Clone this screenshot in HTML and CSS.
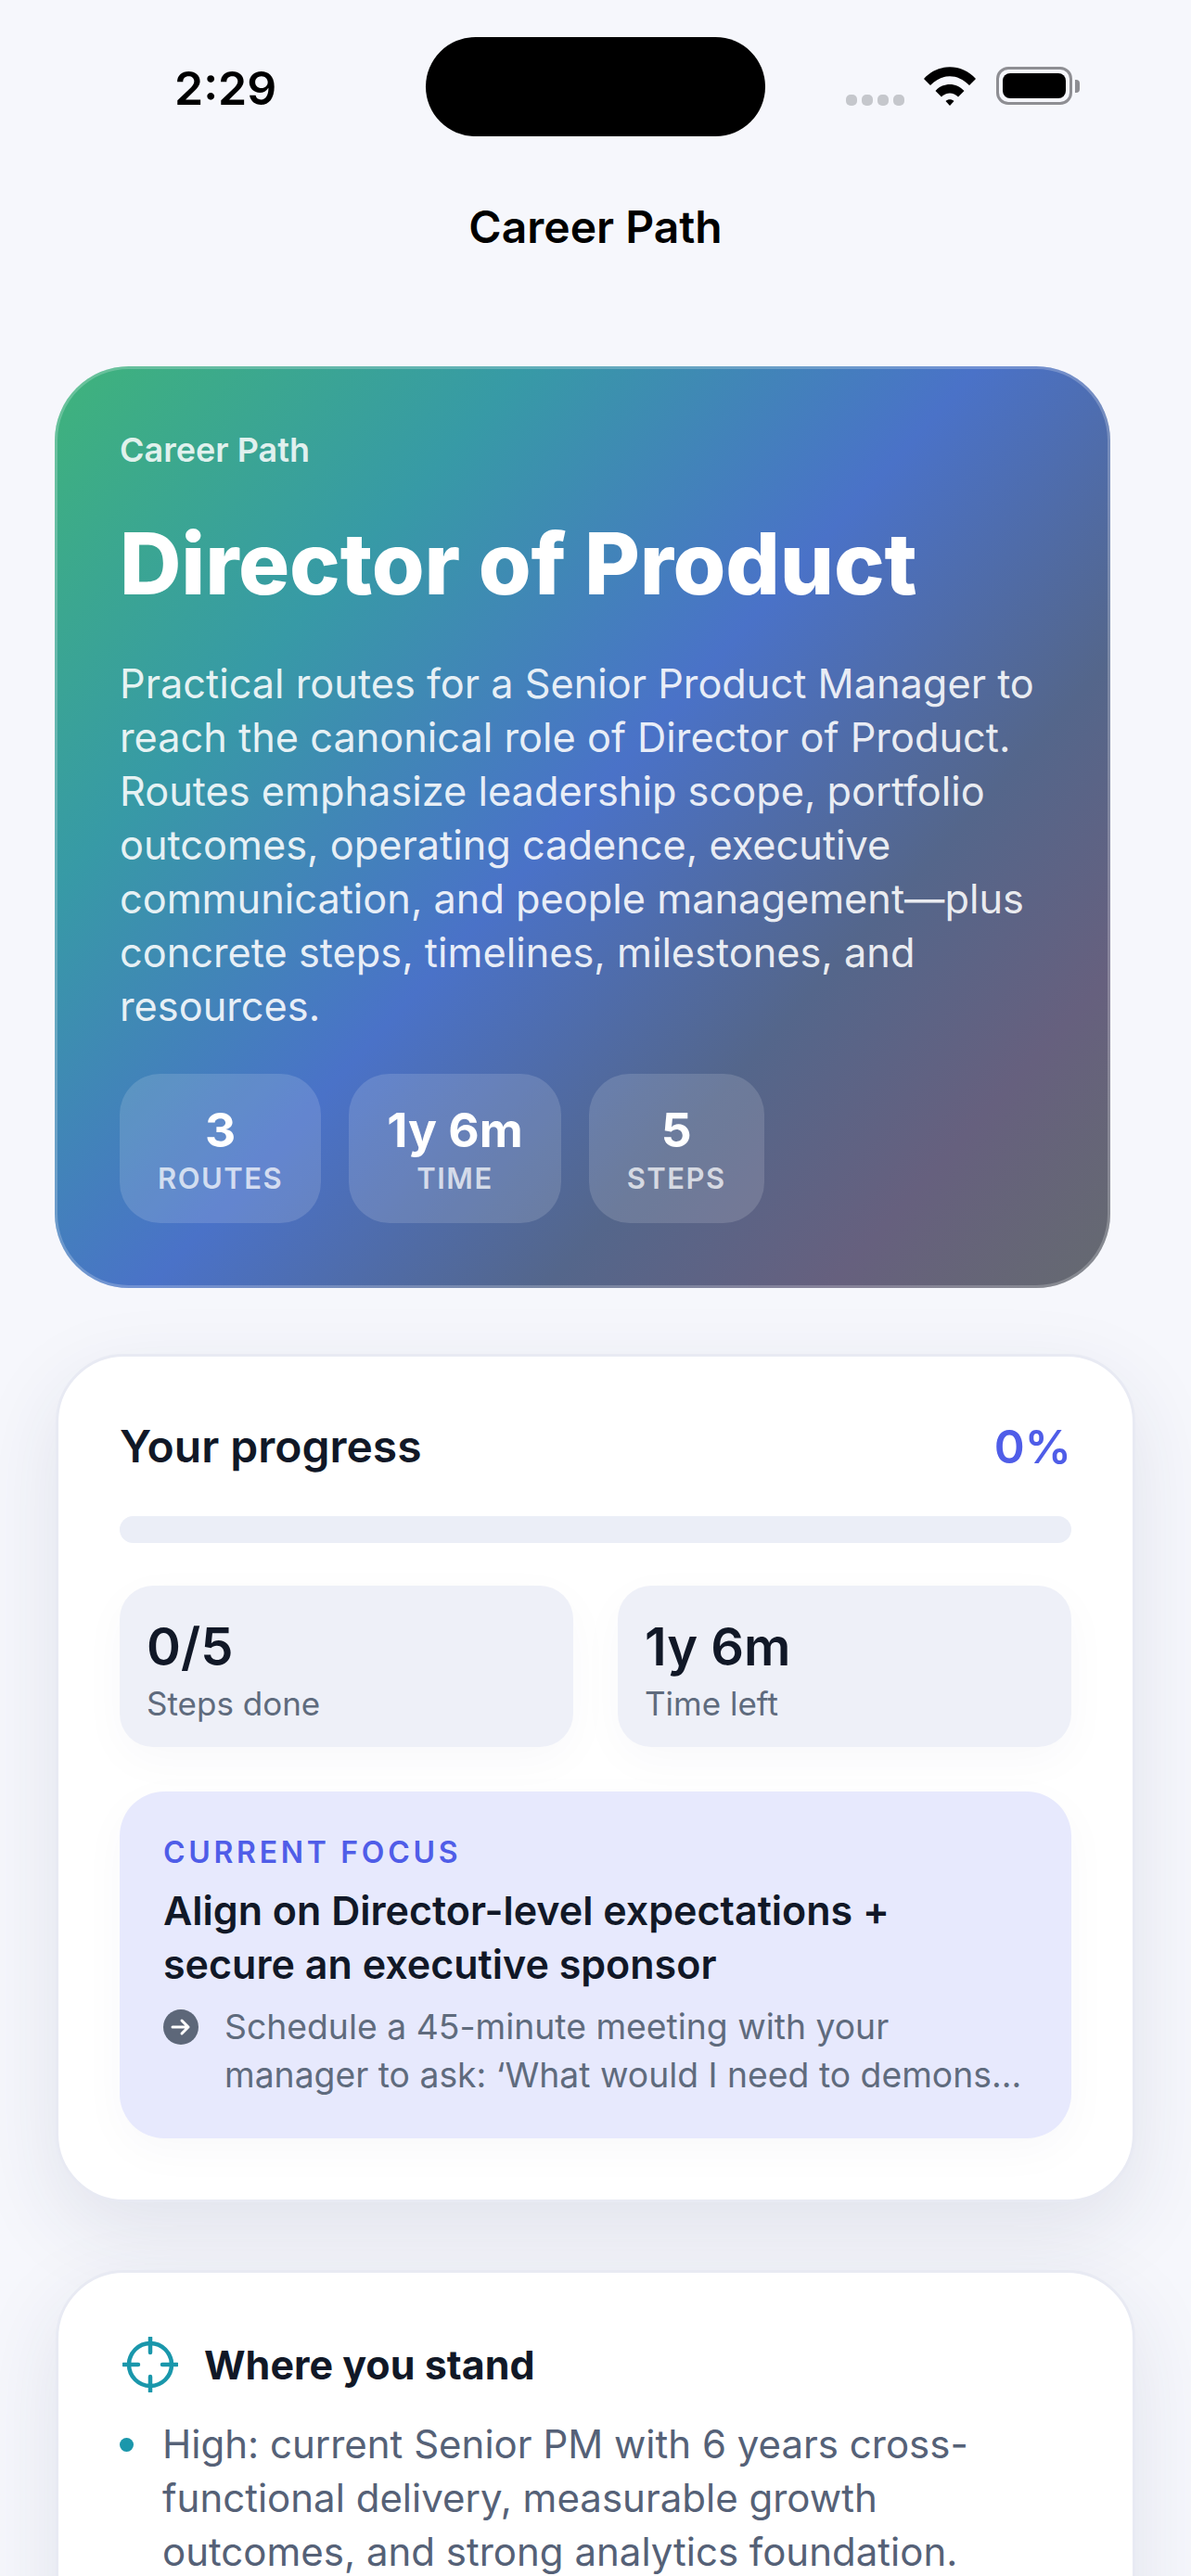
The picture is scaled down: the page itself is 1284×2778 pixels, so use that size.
FILE: index.html
```html
<!DOCTYPE html>
<html lang="en">
<head>
<meta charset="utf-8">
<title>Career Path</title>
<link rel="stylesheet" href="styles.css">
</head>
<body>
<div class="screen">
  <header class="status">
    <span class="time">2:29</span>
    <span class="island"></span>
    <span class="status-right">
      <span class="signal"><i></i><i></i><i></i><i></i></span>
      <svg class="wifi" viewBox="0 0 56 42"><path d="M0 13C15-4 41-4 56 13L49 20C36 7 20 7 7 20Z"/><path d="M12.500 26C21 16.500 35 16.500 43.500 26L37 32.500C31.500 27 24.500 27 19 32.500Z"/><path d="M23.500 37C26 34.500 30 34.500 32.500 37L28 42Z"/></svg>
      <span class="battery"><span class="battery-fill"></span></span>
      <span class="battery-nub"></span>
    </span>
  </header>
  <h1 class="nav-title">Career Path</h1>

  <section class="hero">
    <div class="hero-label">Career Path</div>
    <h2 class="hero-title">Director of Product</h2>
    <p class="hero-desc">Practical routes for a Senior Product Manager to reach the canonical role of Director of Product. Routes emphasize leadership scope, portfolio outcomes, operating cadence, executive communication, and people management—plus concrete steps, timelines, milestones, and resources.</p>
    <div class="pills">
      <div class="pill"><b>3</b><span>ROUTES</span></div>
      <div class="pill"><b>1y 6m</b><span>TIME</span></div>
      <div class="pill"><b>5</b><span>STEPS</span></div>
    </div>
  </section>

  <section class="card progress-card">
    <div class="progress-head"><h3>Your progress</h3><span class="percent">0%</span></div>
    <div class="bar"></div>
    <div class="stats">
      <div class="stat"><b>0/5</b><span>Steps done</span></div>
      <div class="stat"><b>1y 6m</b><span>Time left</span></div>
    </div>
    <div class="focus">
      <div class="focus-label">CURRENT FOCUS</div>
      <div class="focus-title">Align on Director-level expectations + secure an executive sponsor</div>
      <div class="focus-row">
        <svg class="focus-icon" viewBox="0 0 38 38"><circle cx="19" cy="19" r="19" fill="#5d6779"/><path d="M10 19H27M20 12L27 19L20 26" fill="none" stroke="#fff" stroke-width="3" stroke-linecap="round" stroke-linejoin="round"/></svg>
        <p class="focus-text">Schedule a 45-minute meeting with your manager to ask: ‘What would I need to demons…</p>
      </div>
    </div>
  </section>

  <section class="card stand-card">
    <div class="stand-head">
      <svg class="target" viewBox="0 0 60 60"><circle cx="30" cy="30" r="23" fill="none" stroke="#1a97ab" stroke-width="4.500"/><path d="M30 1V17M30 43V59M1 30H17M43 30H59" fill="none" stroke="#1a97ab" stroke-width="4.500" stroke-linecap="round"/></svg>
      <h3>Where you stand</h3>
    </div>
    <ul class="stand-list">
      <li>High: current Senior PM with 6 years cross-functional delivery, measurable growth outcomes, and strong analytics foundation.</li>
    </ul>
  </section>
</div>
</body>
</html>
```
FILE: styles.css
```css
* { box-sizing: border-box; }
html, body { margin: 0; padding: 0; }
body { background: #f6f7fc; font-family: Inter, "Noto Sans", sans-serif; color: #111827; }
.screen { width: 1284px; height: 2778px; overflow: hidden; }
h1, h2, h3, p, ul { margin: 0; padding: 0; }

.status { display: flex; align-items: flex-start; height: 147px; padding: 40px 0 0 188px; }
.time { width: 271px; margin-top: 27px; font-size: 50px; line-height: 56px; font-weight: 600; color: #000; }
.island { width: 366px; height: 107px; border-radius: 54px; background: #000; }
.status-right { display: flex; align-items: flex-start; margin-left: 87px; padding-top: 32px; }
.signal { display: flex; gap: 5px; margin-top: 30px; }
.signal i { width: 12px; height: 12px; border-radius: 5px; background: #c5c7cc; }
.wifi { width: 56px; height: 42px; margin-left: 21px; fill: #000; }
.battery { display: block; width: 82px; height: 41px; margin-left: 22px; padding: 4px; border: 3px solid #8e8e93; border-radius: 13px; }
.battery-fill { display: block; height: 100%; border-radius: 8px; background: #000; }
.battery-nub { width: 5px; height: 14px; margin: 14px 0 0 3px; border-radius: 0 4px 4px 0; background: #8e8e93; }
.nav-title { height: 248px; padding-top: 67px; text-align: center; font-size: 48px; line-height: 62px; font-weight: 600; color: #000; }

.hero { width: 1138px; height: 994px; margin-left: 59px; padding: 70px; border-radius: 80px; color: #fff; background: linear-gradient(132deg, #3fb37b 0%, #379aa6 25%, #4a72c8 49%, #54668b 70%, #66607e 85%, #656a70 100%); box-shadow: inset 0 0 0 3px rgba(255, 255, 255, .22); }
.hero-label { font-size: 36px; line-height: 40px; font-weight: 600; color: rgba(255, 255, 255, .85); }
.hero-title { margin-top: 50px; font-size: 92px; line-height: 106px; font-weight: 800; letter-spacing: -.2px; }
.hero-desc { margin-top: 47px; font-size: 43.300px; line-height: 58px; font-weight: 400; color: rgba(255, 255, 255, .88); }
.pills { display: flex; gap: 30px; margin-top: 44px; }
.pill { display: flex; flex-direction: column; align-items: center; height: 161px; padding: 30px 41px 0; border-radius: 44px; background: rgba(255, 255, 255, .14); }
.pill b { font-size: 51.500px; line-height: 60px; font-weight: 700; }
.pill span { margin-top: 3px; font-size: 31px; line-height: 40px; font-weight: 600; color: rgba(255, 255, 255, .72); letter-spacing: 1.500px; }

.card { width: 1164px; margin-left: 60px; background: #fff; border: 3px solid #e8eaf3; border-radius: 74px; box-shadow: 0 30px 90px rgba(40, 45, 85, .1); }
.progress-card { height: 915px; margin-top: 71px; padding: 67px 66px 0; }
.progress-head { display: flex; justify-content: space-between; align-items: center; height: 60px; }
.progress-head h3 { font-size: 48px; line-height: 60px; font-weight: 600; color: #111827; }
.percent { font-size: 50px; line-height: 60px; font-weight: 600; color: #4f5de8; }
.bar { height: 29px; margin-top: 45px; border-radius: 15px; background: #ebeef7; }
.stats { display: grid; grid-template-columns: 1fr 1fr; gap: 48px; margin-top: 46px; }
.stat { display: flex; flex-direction: column; height: 174px; padding: 34px 29px 0; border-radius: 36px; background: #eef0f8; box-shadow: 0 14px 50px rgba(40, 45, 85, .03); }
.stat b { font-size: 56px; line-height: 64px; font-weight: 600; color: #111827; }
.stat span { margin-top: 6px; font-size: 35px; line-height: 46px; color: #5f6b7d; }
.focus { height: 374px; margin-top: 48px; padding: 46px 47px 0; border-radius: 48px; background: #e7e9fd; box-shadow: 0 14px 50px rgba(40, 45, 85, .03); }
.focus-label { font-size: 32px; line-height: 40px; font-weight: 600; letter-spacing: 3.700px; color: #4f5de8; }
.focus-title { margin-top: 13px; font-size: 43px; line-height: 58px; font-weight: 600; color: #111827; }
.focus-row { display: flex; gap: 28px; margin-top: 13px; }
.focus-icon { flex: none; width: 38px; height: 38px; margin-top: 7px; }
.focus-text { font-size: 37.300px; line-height: 52px; color: #5f6b7d; }

.stand-card { height: 600px; margin-top: 73px; padding: 69px 66px 0; }
.stand-head { display: flex; align-items: center; gap: 28px; height: 60px; padding-left: 3px; }
.target { flex: none; width: 60px; height: 60px; }
.stand-head h3 { font-size: 43px; line-height: 60px; font-weight: 700; color: #111827; }
.stand-list { list-style: none; margin-top: 27px; }
.stand-list li { position: relative; padding-left: 46px; font-size: 42px; line-height: 58px; color: #556177; }
.stand-list li::before { content: ""; position: absolute; left: 0; top: 22px; width: 15px; height: 15px; border-radius: 50%; background: #1a97ab; }
```
